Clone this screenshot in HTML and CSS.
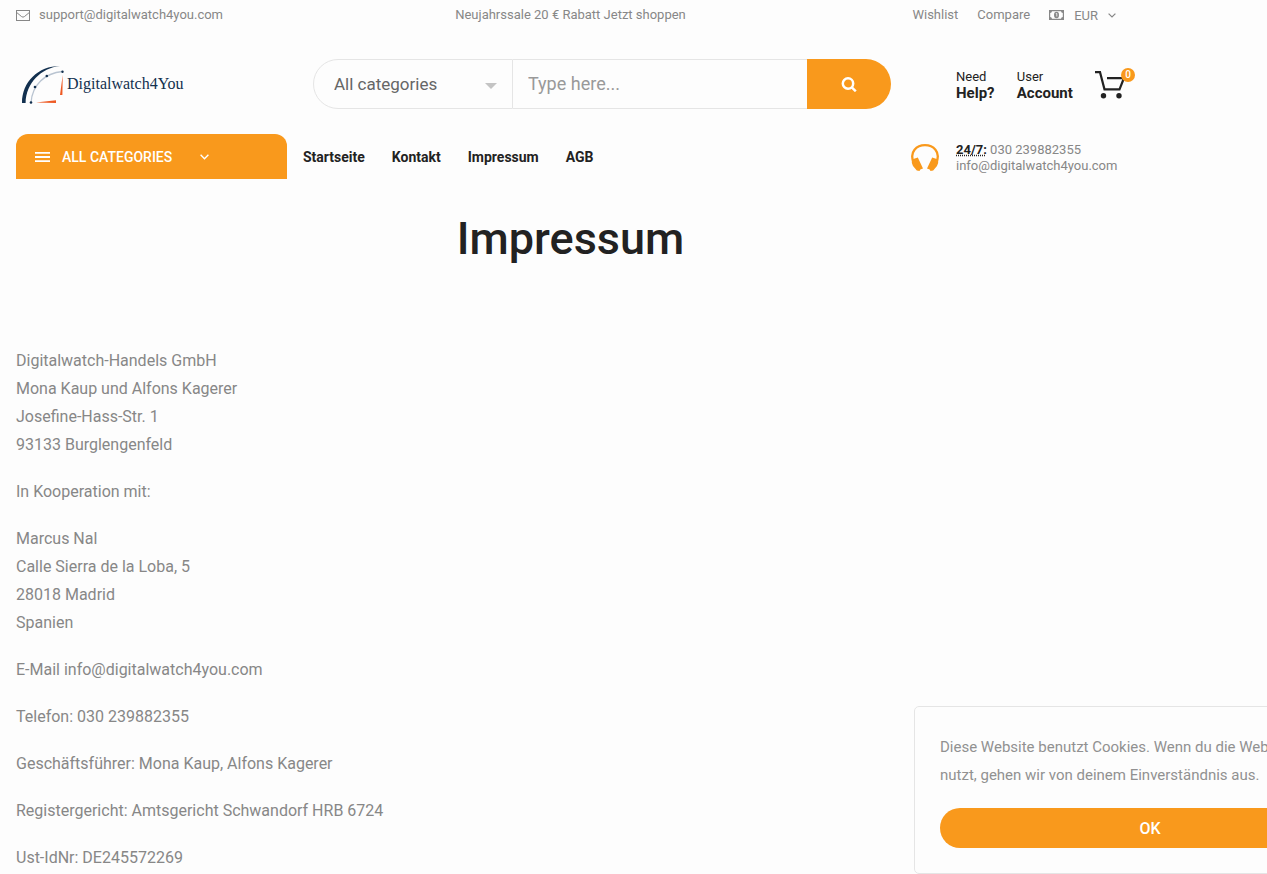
FILE: index.html
```html
<!DOCTYPE html>
<html lang="de">
<head>
  <meta charset="UTF-8" />
  <meta name="viewport" content="width=device-width, initial-scale=1" />
  <title>Impressum</title>
  <link rel="stylesheet" href="styles.css">
</head>
<body>

  <header class="container">
    <div class="topbar">
      <a class="topbar-mail" href="mailto:support@digitalwatch4you.com">
        <svg width="14" height="11" viewBox="0 0 14 11" fill="none" stroke="currentColor"><rect x=".5" y=".5" width="13" height="10"/><path d="M.7 2.500 5.600 6.600Q7 7.700 8.400 6.600L13.300 2.500"/></svg>
        support@digitalwatch4you.com
      </a>
      <a class="topbar-sale" href="#">Neujahrssale 20 € Rabatt Jetzt shoppen</a>
      <div class="topbar-links">
        <a href="#">Wishlist</a>
        <a href="#">Compare</a>
        <button class="currency" type="button">
          <svg width="15" height="10" viewBox="0 0 15 10"><path fill="currentColor" fill-rule="evenodd" d="M0 0h15v10H0zM3 1.200Q2.800 2.800 1.200 3v4Q2.800 7.200 3 8.800h9Q12.200 7.200 13.800 7V3Q12.200 2.800 12 1.200z"/><ellipse cx="7.500" cy="5" rx="2.500" ry="3.200" fill="currentColor"/><path d="M6.800 3.500h1v3" fill="none" stroke="#fdfdfd" stroke-width=".8"/></svg>
          EUR
          <svg width="8" height="5" viewBox="0 0 8 5" fill="none" stroke="currentColor" stroke-width="1.200"><path d="m.6.6 3.400 3.400L7.400.6"/></svg>
        </button>
      </div>
    </div>

    <div class="main-row">
      <a class="logo" href="#">
        <svg width="44" height="40" viewBox="0 0 44 40">
          <path fill="#12304f" d="M1 39C1 18 17 2 39 2 20 4 5 19 4.600 39z"/>
          <path d="M10 39C11 21 24 9 41.500 7.500" fill="none" stroke="#b9c4d1" stroke-width="1.300"/>
          <g fill="#12304f"><circle cx="10" cy="38.500" r="1.300"/><circle cx="14" cy="23" r="1.300"/><circle cx="25.800" cy="12" r="1.300"/><circle cx="41.500" cy="7.700" r="1.200"/></g>
          <path fill="#ee5a24" d="m41.700 11-.3 20H39zM15 38.500l20-2.300v2.800z"/>
        </svg>
        <span>Digitalwatch4You</span>
      </a>

      <form class="search">
        <select class="search-category" aria-label="Kategorie">
          <option>All categories</option>
        </select>
        <svg class="search-caret" width="12" height="6" viewBox="0 0 12 6"><path fill="#c4c4c4" d="M0 0h12L6 6z"/></svg>
        <input class="search-text" type="text" placeholder="Type here..." aria-label="Suche">
        <button class="search-button" type="submit" aria-label="Suchen">
          <svg width="16" height="16" viewBox="0 0 16 16" fill="none" stroke="#fff" stroke-width="2.500"><circle cx="7" cy="7.500" r="5.200"/><path d="m10.800 11.300 4 4"/></svg>
        </button>
      </form>

      <div class="user-links">
        <a href="#">Need<strong>Help?</strong></a>
        <a href="#">User<strong>Account</strong></a>
        <a class="cart" href="#" aria-label="Warenkorb">
          <svg width="30" height="28" viewBox="0 0 30 28"><path d="M0 1.200h5L9.500 18.300H24.500L29 7M12 7.200h17" fill="none" stroke="#222" stroke-width="2.200"/><circle cx="8.500" cy="24.700" r="2.700" fill="#222"/><circle cx="24" cy="24.700" r="2.700" fill="#222"/></svg>
          <span class="badge">0</span>
        </a>
      </div>
    </div>

    <div class="nav-row">
      <button class="all-categories" type="button">
        <svg width="15" height="10" viewBox="0 0 15 10" fill="#fff"><path d="M0 0h15v1.800H0zM0 4.100h15v1.800H0zM0 8.200h15V10H0z"/></svg>
        <span>ALL CATEGORIES</span>
        <svg width="9" height="6" viewBox="0 0 9 6" fill="none" stroke="#fff" stroke-width="1.400"><path d="m.6.8 3.900 3.900L8.400.8"/></svg>
      </button>
      <nav>
        <ul>
          <li><a href="#">Startseite</a></li>
          <li><a href="#">Kontakt</a></li>
          <li><a href="#">Impressum</a></li>
          <li><a href="#">AGB</a></li>
        </ul>
      </nav>
      <div class="hotline">
        <svg width="28" height="28" viewBox="0 0 28 28"><path d="M2.300 17.500C-1.500 8 5.500 1.200 14 1.200S29.500 8 25.700 17.500" fill="none" stroke="#f9991c" stroke-width="2.300"/><path fill="#f9991c" d="m.8 15.500 6-2 5.200 11-2.700 1-.8 1.500-2.700-.5L2 22Q.3 19 .8 15.500zM27.200 15.500l-6-2-5.200 11 2.700 1 .8 1.500 2.700-.5L26 22Q27.700 19 27.200 15.500z"/></svg>
        <p><abbr title="Hotline">24/7:</abbr> 030 239882355<br><a href="mailto:info@digitalwatch4you.com">info@digitalwatch4you.com</a></p>
      </div>
    </div>
  </header>

  <main class="container">
    <h1>Impressum</h1>

    <div class="content">
      <p>Digitalwatch-Handels GmbH<br>Mona Kaup und Alfons Kagerer<br>Josefine-Hass-Str. 1<br>93133 Burglengenfeld</p>
      <p>In Kooperation mit:</p>
      <p>Marcus Nal<br>Calle Sierra de la Loba, 5<br>28018 Madrid<br>Spanien</p>
      <p>E-Mail info@digitalwatch4you.com</p>
      <p>Telefon: 030 239882355</p>
      <p>Geschäftsführer: Mona Kaup, Alfons Kagerer</p>
      <p>Registergericht: Amtsgericht Schwandorf HRB 6724</p>
      <p>Ust-IdNr: DE245572269</p>
    </div>
  </main>

  <div class="cookie-box">
    <p>Diese Website benutzt Cookies. Wenn du die Website<br>nutzt, gehen wir von deinem Einverständnis aus.</p>
    <button type="button">OK</button>
  </div>

</body>
</html>
```
FILE: styles.css
```css
* {
  box-sizing: border-box;
}

body {
  margin: 0;
  font-family: Roboto, sans-serif;
  font-size: 16px;
  line-height: 28px;
  color: #878787;
  background-color: #fdfdfd;
  overflow-x: hidden;
}

a {
  color: inherit;
  text-decoration: none;
}

button, input, select {
  font-family: inherit;
  border: none;
  background: none;
  padding: 0;
  margin: 0;
}

button {
  cursor: pointer;
}

svg {
  display: block;
  flex-shrink: 0;
}

.container {
  max-width: 1141px;
  padding: 0 16px;
}

/* top bar */
.topbar {
  display: grid;
  grid-template-columns: 1fr auto 1fr;
  align-items: center;
  height: 30px;
  font-size: 13px;
}

.topbar-mail {
  display: flex;
  align-items: center;
  gap: 9px;
}

.topbar-links {
  display: flex;
  justify-content: flex-end;
  gap: 19px;
  padding-right: 9px;
}

.currency {
  display: flex;
  align-items: center;
  gap: 10px;
  font-size: 13px;
  color: inherit;
}

/* logo, search, account */
.main-row {
  display: flex;
  align-items: center;
  margin-top: 29px;
}

.logo {
  display: flex;
  align-items: center;
  width: 297px;
  padding-left: 5px;
  gap: 2px;
  font-family: "Liberation Serif", serif;
  font-size: 16px;
  color: #12304f;
}

.search {
  position: relative;
  display: flex;
  flex: 1;
  height: 50px;
}

.search-category {
  width: 200px;
  padding-left: 20px;
  border: 1px solid #e5e5e5;
  border-radius: 25px 0 0 25px;
  appearance: none;
  font-size: 17px;
  color: #666;
}

.search-caret {
  position: absolute;
  left: 172px;
  top: 24px;
  pointer-events: none;
}

.search-text {
  flex: 1;
  min-width: 0;
  padding: 0 15px 2px;
  border: solid #e5e5e5;
  border-width: 1px 0;
  font-size: 18px;
}

.search-text::placeholder {
  color: #999;
}

.search-button {
  display: flex;
  align-items: center;
  justify-content: center;
  width: 84px;
  border-radius: 0 25px 25px 0;
  background-color: #f9991c;
}

.user-links {
  display: flex;
  align-items: center;
  justify-content: space-between;
  width: 234px;
  padding: 2px 0 0 65px;
  font-size: 13px;
  line-height: 16px;
  color: #222;
}

.user-links strong {
  display: block;
  font-size: 15px;
}

.cart {
  position: relative;
}

.badge {
  position: absolute;
  top: -3px;
  right: -10px;
  width: 14px;
  height: 14px;
  border-radius: 50%;
  background-color: #f9991c;
  color: #fff;
  font-size: 10px;
  font-weight: 500;
  line-height: 14px;
  text-align: center;
}

/* navigation */
.nav-row {
  display: flex;
  align-items: center;
  margin-top: 25px;
}

.all-categories {
  display: flex;
  align-items: center;
  width: 271px;
  height: 45px;
  padding: 0 19px;
  gap: 12px;
  border-radius: 12px 12px 0 0;
  background-color: #f9991c;
  color: #fff;
  font-size: 14px;
  font-weight: 500;
}

.all-categories span {
  margin-right: 16px;
}

nav ul {
  display: flex;
  gap: 27px;
  margin: 0;
  padding: 0 16px;
  list-style: none;
  font-size: 14px;
  font-weight: 700;
  color: #222;
}

.hotline {
  display: flex;
  align-items: center;
  gap: 17px;
  width: 214px;
  margin-left: auto;
  padding-top: 2px;
  font-size: 13px;
  line-height: 16px;
}

.hotline p {
  margin: 0;
}

.hotline abbr {
  color: #222;
  font-weight: 700;
}

/* page content */
h1 {
  margin: 32px 0 81px;
  font-size: 45px;
  font-weight: 500;
  line-height: 55px;
  text-align: center;
  color: #222;
}

.content p {
  margin: 0 0 19px;
}

/* cookie notice, runs past the right window edge */
.cookie-box {
  position: fixed;
  right: -119px;
  bottom: 0;
  width: 472px;
  padding: 26px 25px 25px;
  border: 1px solid #e5e5e5;
  border-radius: 5px;
  background-color: #fdfdfd;
  font-size: 15px;
  color: #919191;
}

.cookie-box p {
  margin: 0 0 19px;
}

.cookie-box button {
  width: 100%;
  height: 40px;
  border-radius: 20px;
  background-color: #f9991c;
  color: #fff;
  font-size: 16px;
  font-weight: 500;
}
```
